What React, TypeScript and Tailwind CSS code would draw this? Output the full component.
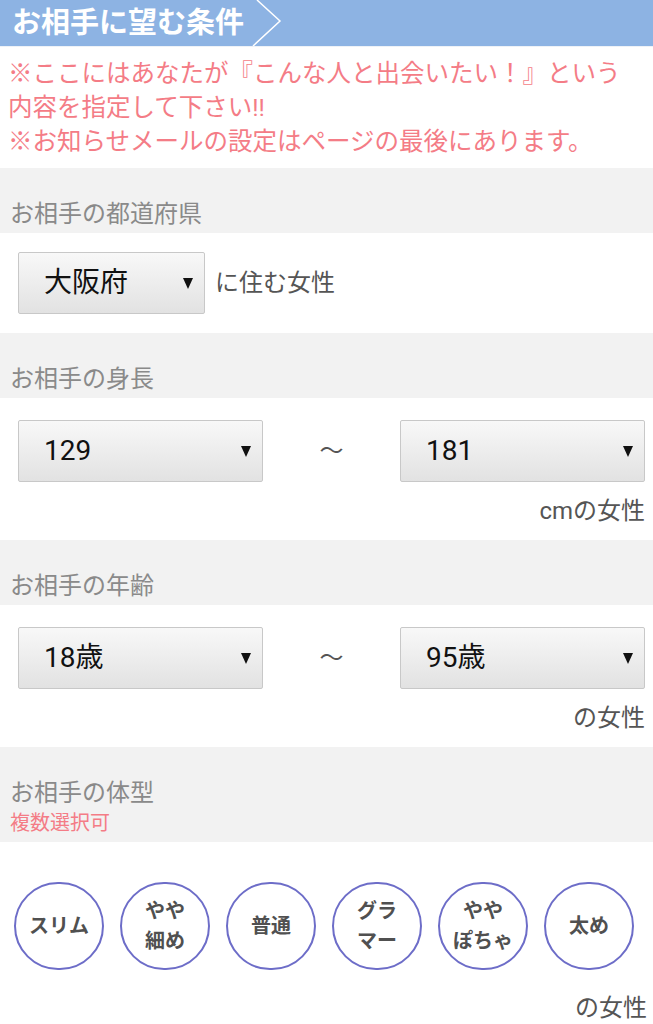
const FONT = "font-['Roboto','Noto_Sans_CJK_JP',sans-serif]";

function SectionLabel({ title, note }: { title: string; note?: string }) {
  return (
    <div className={`bg-[#f2f2f2] px-[10px] pt-[30px] ${note ? "pb-[5px]" : "pb-[3px]"}`}>
      <p className="text-[24px] leading-[32px] text-[#8a8a8a]">{title}</p>
      {note && <p className="text-[20px] leading-[28px] text-[#f47c86]">{note}</p>}
    </div>
  );
}

function Select({ value, className = "" }: { value: string; className?: string }) {
  return (
    <div
      className={`flex h-[62px] items-center justify-between rounded-[2px] border border-[#c8c8c8] bg-gradient-to-b from-[#f8f8f8] to-[#e2e2e2] pl-[25px] pr-[11px] ${className}`}
    >
      <span className="text-[28px] leading-none text-[#111]">{value}</span>
      <svg width="10" height="11" viewBox="0 0 10 11" aria-hidden>
        <polygon points="0,0 10,0 5,11" fill="#111" />
      </svg>
    </div>
  );
}

function RangeRow({ from, to, suffix }: { from: string; to: string; suffix: string }) {
  return (
    <div className="bg-white pl-[18px] pr-[8px] pt-[22px]">
      <div className="flex items-center">
        <Select value={from} className="w-[245px]" />
        <span className="flex-1 text-center text-[24px] text-[#555]">～</span>
        <Select value={to} className="w-[245px]" />
      </div>
      <p className="mt-[14px] pb-[14px] text-right text-[24px] leading-[30px] text-[#555]">{suffix}</p>
    </div>
  );
}

const SHAPES = [["スリム"], ["やや", "細め"], ["普通"], ["グラ", "マー"], ["やや", "ぽちゃ"], ["太め"]];

export default function App() {
  return (
    <div className={`${FONT} w-[653px] bg-white`}>
      {/* header */}
      <div className="flex h-[46px] items-center bg-[#8db3e3]">
        <h1 className="pl-[12px] text-[29px] font-bold leading-none text-white">お相手に望む条件</h1>
        <svg className="ml-[8px]" width="32" height="46" viewBox="0 0 32 46" aria-hidden>
          <polyline points="5,0 28,21 1,46" fill="none" stroke="#ffffff" strokeWidth="1.5" />
        </svg>
      </div>

      {/* notice */}
      <div className="border-t border-[#eef2f7] px-[8px] pt-[10px] pb-[9px] text-[24.5px] leading-[34px] text-[#f47c86]">
        <p>※ここにはあなたが『こんな人と出会いたい！』という</p>
        <p>内容を指定して下さい!!</p>
        <p>※お知らせメールの設定はページの最後にあります。</p>
      </div>

      <SectionLabel title="お相手の都道府県" />
      <div className="flex items-center gap-[10px] bg-white px-[18px] py-[19px]">
        <Select value="大阪府" className="w-[187px]" />
        <span className="text-[24px] text-[#555]">に住む女性</span>
      </div>

      <SectionLabel title="お相手の身長" />
      <RangeRow from="129" to="181" suffix="cmの女性" />

      <SectionLabel title="お相手の年齢" />
      <RangeRow from="18歳" to="95歳" suffix="の女性" />

      <SectionLabel title="お相手の体型" note="複数選択可" />
      <div className="bg-white pt-[40px] pb-[4px]">
        <div className="flex gap-[16px] pl-[14px]">
          {SHAPES.map((lines) => (
            <div
              key={lines.join("")}
              className="flex h-[88px] w-[90px] flex-col items-center justify-center rounded-full border-2 border-[#6d6dc8]"
            >
              {lines.map((l) => (
                <span key={l} className="text-[20px] font-bold leading-[30px] text-[#505050]">
                  {l}
                </span>
              ))}
            </div>
          ))}
        </div>
        <p className="mt-[23px] pr-[6px] text-right text-[24px] leading-[30px] text-[#555]">の女性</p>
      </div>
    </div>
  );
}
